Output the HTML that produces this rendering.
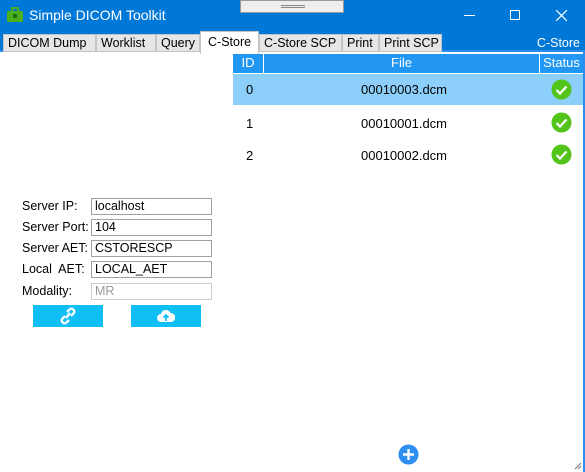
<!DOCTYPE html>
<html><head><style>
*{box-sizing:border-box;margin:0;padding:0}
body{width:585px;height:472px;overflow:hidden;background:#fff;font-family:"Liberation Sans","Noto Sans CJK SC",sans-serif;font-size:13px;position:relative;color:#000}
.a{position:absolute}
#title{left:0;top:0;width:585px;height:33px;background:#0078d7;color:#fff}
#tabs{left:0;top:33px;width:585px;height:19px;background:#0078d7;border-bottom:2px solid #2a8ef0}
.tab{position:absolute;top:1px;height:18px;background:#e6e6e6;border:1px solid #c4c4c4;font-size:12.5px;line-height:17px;padding-left:4px;color:#000}
.lbl{position:absolute;left:22px;font-size:12.5px}
.inp{position:absolute;left:91px;width:121px;height:17px;border:1px solid #a0a0a0;font-size:12.5px;line-height:15px;padding-left:3px}
.btn{position:absolute;top:305px;width:70px;height:22px;background:#10bff5}
.th{position:absolute;top:54px;height:19px;background:#2196f3;color:#fff;text-align:center;line-height:18px;font-size:13px}
.cell{position:absolute;font-size:13px}
</style></head><body>
<div id="title" class="a">
<svg class="a" style="left:7px;top:7px" width="16" height="15" viewBox="0 0 16 15"><rect x="0" y="4" width="16" height="11" rx="1" fill="#4caf1a"/><rect x="5" y="1" width="6" height="4" fill="none" stroke="#4caf1a" stroke-width="2"/><rect x="6" y="7" width="4" height="4" fill="#1c6f0a"/></svg>
<div class="a" style="left:29px;top:7px;font-size:14px">Simple DICOM Toolkit</div>
<div class="a" style="left:240px;top:0;width:104px;height:13px;background:#eee;border:1px solid #999"><div class="a" style="left:40px;top:4px;width:24px;height:3px;border-top:1px solid #888;border-bottom:1px solid #888"></div></div>
<div class="a" style="left:464px;top:15px;width:11px;height:1px;background:#fff"></div>
<div class="a" style="left:510px;top:10px;width:10px;height:10px;border:1px solid #fff"></div>
<svg class="a" style="left:556px;top:10px" width="11" height="11"><path d="M0 0L11 11M11 0L0 11" stroke="#fff" stroke-width="1.2"/></svg>
</div>
<div id="tabs" class="a">
<div class="tab" style="left:3px;width:93px">DICOM Dump</div>
<div class="tab" style="left:96px;width:60px">Worklist</div>
<div class="tab" style="left:156px;width:44px">Query</div>
<div class="tab" style="left:200px;top:-2px;height:23px;width:59px;background:#fff;border-bottom:none;line-height:21px;padding-left:7px">C-Store</div>
<div class="tab" style="left:259px;width:83px">C-Store SCP</div>
<div class="tab" style="left:342px;width:37px">Print</div>
<div class="tab" style="left:379px;width:63px">Print SCP</div>
<div class="a" style="right:5px;top:3px;color:#fff;font-size:12.5px">C-Store</div>
</div>
<div class="a" style="right:0;top:52px;width:2px;height:420px;background:#2a8ef0"></div>
<div class="th" style="left:233px;width:30px">ID</div>
<div class="th" style="left:264px;width:275px">File</div>
<div class="th" style="left:540px;width:43px">Status</div>
<div class="a" style="left:233px;top:74px;width:350px;height:31px;background:#8ccffa"></div>
<div class="cell" style="left:246px;top:82px">0</div><div class="cell" style="left:361px;top:82px">00010003.dcm</div>
<div class="cell" style="left:246px;top:116px">1</div><div class="cell" style="left:361px;top:116px">00010001.dcm</div>
<div class="cell" style="left:246px;top:148px">2</div><div class="cell" style="left:361px;top:148px">00010002.dcm</div>
<svg class="a" style="left:551px;top:79px" width="21" height="21"><circle cx="10.5" cy="10.5" r="10" fill="#52c41a"/><path d="M5.5 11l3.5 3.5 6.5-7" stroke="#fff" stroke-width="2.2" fill="none"/></svg>
<svg class="a" style="left:551px;top:112px" width="21" height="21"><circle cx="10.5" cy="10.5" r="10" fill="#52c41a"/><path d="M5.5 11l3.5 3.5 6.5-7" stroke="#fff" stroke-width="2.2" fill="none"/></svg>
<svg class="a" style="left:551px;top:144px" width="21" height="21"><circle cx="10.5" cy="10.5" r="10" fill="#52c41a"/><path d="M5.5 11l3.5 3.5 6.5-7" stroke="#fff" stroke-width="2.2" fill="none"/></svg>
<div class="lbl" style="top:199px">Server IP:</div><div class="inp" style="top:198px">localhost</div>
<div class="lbl" style="top:220px">Server Port:</div><div class="inp" style="top:219px">104</div>
<div class="lbl" style="top:241px">Server AET:</div><div class="inp" style="top:240px">CSTORESCP</div>
<div class="lbl" style="top:262px">Local&nbsp; AET:</div><div class="inp" style="top:261px">LOCAL_AET</div>
<div class="lbl" style="top:284px">Modality:</div><div class="inp" style="top:283px;border-color:#ccc;color:#999">MR</div>
<div class="btn" style="left:33px"><svg class="a" style="left:25px;top:2px" width="20" height="18" viewBox="0 0 20 18"><g fill="none" stroke="#fff" stroke-width="2.3"><path d="M9 5l3-3a3 3 0 0 1 4 4l-3 3"/><path d="M11 13l-3 3a3 3 0 0 1-4-4l3-3"/><path d="M8 11l4-5"/></g></svg></div>
<div class="btn" style="left:131px"><svg class="a" style="left:26px;top:4px" width="18" height="14" viewBox="0 0 18 14"><path d="M4 13a4 4 0 0 1 0-8a5 5 0 0 1 9.5-1a4.5 4.5 0 0 1 0.5 9z" fill="#fff"/><path d="M9 12V6M6.5 8.5L9 6l2.5 2.5" stroke="#10bff5" stroke-width="1.8" fill="none"/></svg></div>
<svg class="a" style="left:398px;top:444px" width="21" height="21"><circle cx="10.5" cy="10.5" r="10" fill="#2f8ff0"/><path d="M10.5 5v11M5 10.5h11" stroke="#fff" stroke-width="2.4"/></svg>
<svg class="a" style="left:573px;top:461px" width="9" height="9"><path d="M8 2L2 8M8 5L5 8M8 8L8 8" stroke="#777" stroke-width="1"/></svg>
</body></html>
